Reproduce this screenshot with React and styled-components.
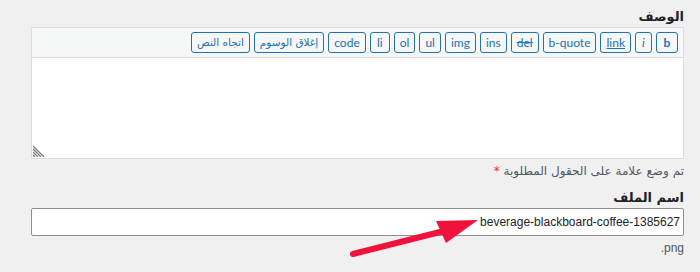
import styled, { createGlobalStyle } from "styled-components";

const GlobalStyle = createGlobalStyle`
    body {
        margin: 0;
        background: #f0f0f1;
        font-family: Tahoma, "DejaVu Sans", sans-serif;
    }
`;

const buttons = [
    { label: "b", bold: true, min: 22 },
    { label: "i", italic: true, min: 17 },
    { label: "link", underline: true },
    { label: "b-quote" },
    { label: "del", strike: true },
    { label: "ins" },
    { label: "img" },
    { label: "ul" },
    { label: "ol" },
    { label: "li" },
    { label: "code" },
    { label: "إغلاق الوسوم", arabic: true },
    { label: "اتجاه النص", arabic: true },
];

export default function App() {
    return (
        <>
            <GlobalStyle />
            <Page dir="rtl">
                <Label>الوصف</Label>
                <Editor>
                    <Toolbar>
                        {buttons.map((b) => (
                            <TagButton
                                key={b.label}
                                $min={b.min}
                                $bold={b.bold}
                                $italic={b.italic}
                                $underline={b.underline}
                                $strike={b.strike}
                                $arabic={b.arabic}
                            >
                                {b.label}
                            </TagButton>
                        ))}
                    </Toolbar>
                    <TextArea>
                        <Grip viewBox="0 0 12 12">
                            <path d="M0 1 L11 12 M0 4 L8 12 M0 7 L5 12 M0 10 L2 12" stroke="#7c7c7c" strokeWidth="1.3" />
                        </Grip>
                    </TextArea>
                </Editor>
                <Note>
                    تم وضع علامة على الحقول المطلوبة <Required>*</Required>
                </Note>
                <Label $top={13}>اسم الملف</Label>
                <FileInput>beverage-blackboard-coffee-1385627</FileInput>
                <Note>
                    <Ext>.png</Ext>
                </Note>

                <Arrow viewBox="0 0 700 272" width="700" height="272">
                    <line x1="353" y1="254" x2="452" y2="229" stroke="#f0123a" strokeWidth="6" strokeLinecap="round" />
                    <polygon points="478,220 436,221 446,243" fill="#f0123a" />
                </Arrow>
            </Page>
        </>
    );
}

const Page = styled.div`
    position: relative;
    height: 272px;
    box-sizing: border-box;
    padding: 10px 16px 0 31px;
    color: #1d2327;
`;

const Label = styled.div`
    font-weight: 700;
    font-size: 13px;
    line-height: 14px;
    margin: ${(p) => p.$top || 0}px 0 3px 0;
`;

const Editor = styled.div`
    border: 1px solid #dcdcde;
    background: #fff;
`;

const Toolbar = styled.div`
    display: flex;
    gap: 4px;
    padding: 4px 5px;
    background: #f6f7f7;
    border-bottom: 1px solid #dcdcde;
`;

const TagButton = styled.div`
    height: 21px;
    min-width: ${(p) => p.$min || 20}px;
    box-sizing: border-box;
    padding: 0 5px;
    border: 1px solid #2271b1;
    border-radius: 3px;
    color: #2271b1;
    background: #f6f7f7;
    font-family: ${(p) => (p.$arabic ? '"DejaVu Sans", sans-serif' : 'Lato, "DejaVu Sans", sans-serif')};
    font-size: ${(p) => (p.$arabic ? 10.5 : 12)}px;
    line-height: 19px;
    text-align: center;
    font-weight: ${(p) => (p.$bold ? 700 : 400)};
    font-style: ${(p) => (p.$italic ? "italic" : "normal")};
    text-decoration: ${(p) => (p.$underline ? "underline" : p.$strike ? "line-through" : "none")};
    white-space: nowrap;
`;

const TextArea = styled.div`
    position: relative;
    height: 100px;
`;

const Grip = styled.svg`
    position: absolute;
    left: 1px;
    bottom: 1px;
    width: 12px;
    height: 12px;
`;

const Note = styled.div`
    font-size: 12px;
    line-height: 14px;
    color: #50575e;
    margin-top: 5px;
`;

const Required = styled.span`
    color: #d63638;
`;

const Ext = styled.span`
    direction: ltr;
    unicode-bidi: isolate;
    font-family: "Liberation Sans", Arial, sans-serif;
    font-size: 12px;
`;

const FileInput = styled.div`
    height: 28px;
    box-sizing: border-box;
    border: 1px solid #8c8f94;
    border-radius: 2px;
    background: #fff;
    padding: 0 3px;
    font-family: "Liberation Sans", Arial, sans-serif;
    font-size: 12px;
    line-height: 26px;
    color: #1d2327;
    text-align: right;
`;

const Arrow = styled.svg`
    position: absolute;
    left: 0;
    top: 0;
    pointer-events: none;
`;
